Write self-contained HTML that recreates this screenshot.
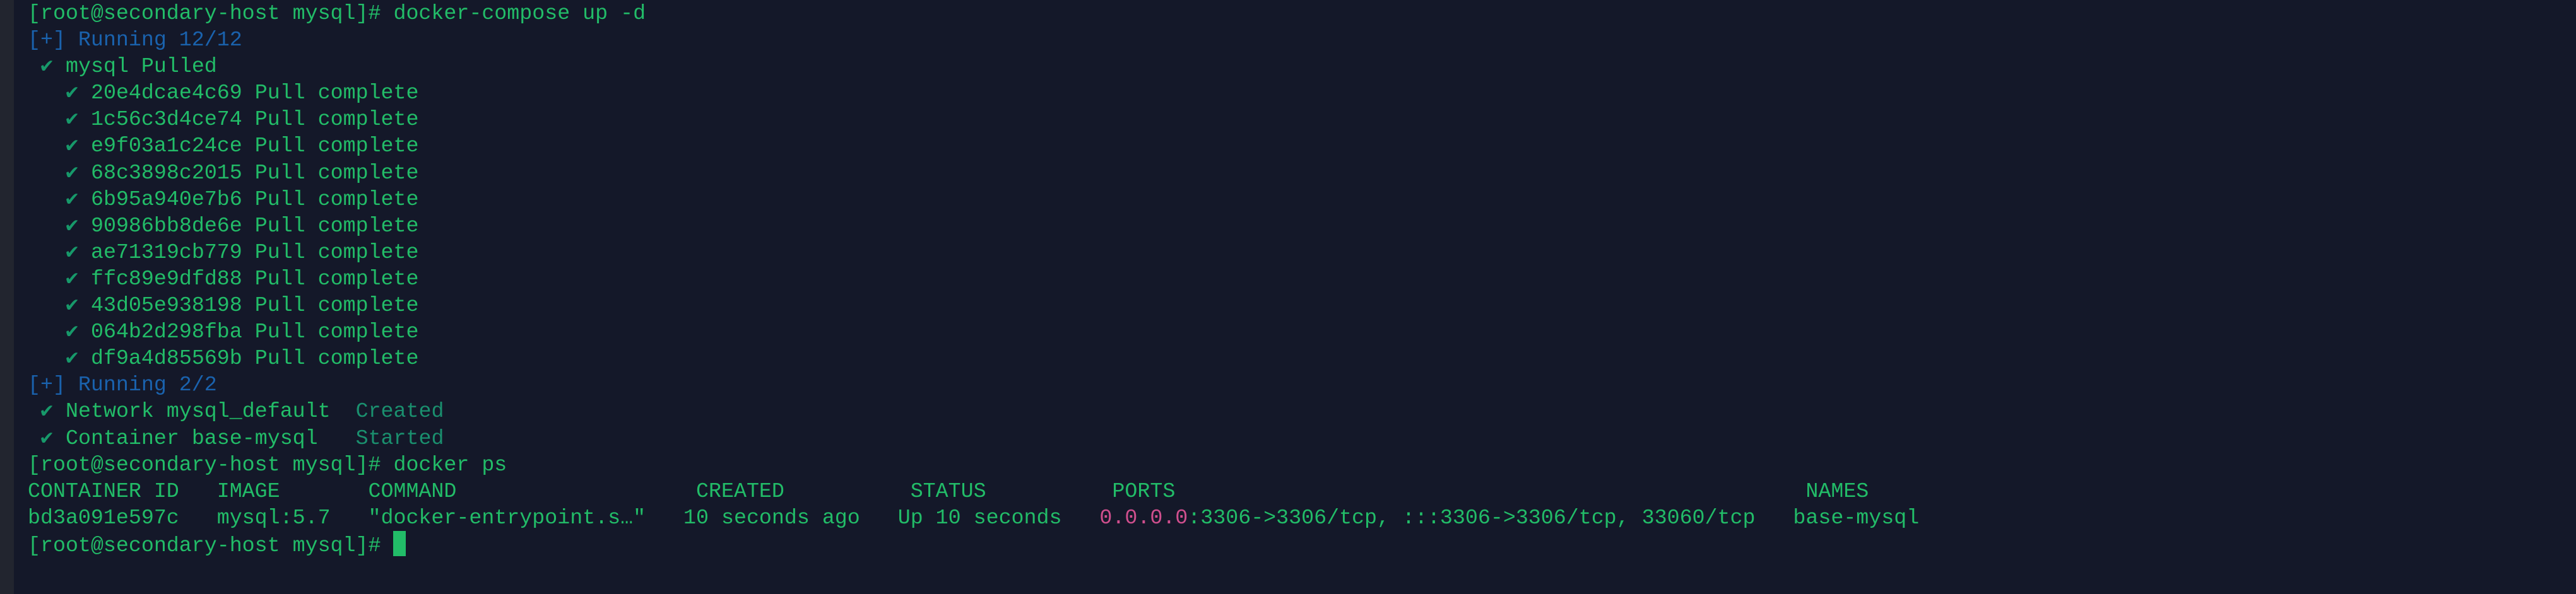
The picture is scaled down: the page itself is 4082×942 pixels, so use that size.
<!DOCTYPE html>
<html><head><meta charset="utf-8"><style>
html,body{margin:0;padding:0;width:4082px;height:942px;background:#141829;overflow:hidden}
.strip{position:absolute;left:0;top:0;width:22px;height:942px;background:#22252f}
pre{position:absolute;left:44px;top:0;margin:0;font-family:"Liberation Mono","DejaVu Sans Mono",monospace;font-size:33.3px;line-height:42.1px;color:#22bc68;white-space:pre}
.b{color:#1a62ad}.k{color:#17996a}.c{color:#1a8f6e}.p{color:#d04f8e}
.cur{display:inline-block;width:20px;height:40px;background:#22bc68;vertical-align:-8px}
</style></head><body><div class="strip"></div><pre>[root@secondary-host mysql]# docker-compose up -d
<span class="b">[+] Running 12/12</span>
 <span class="k">✔</span> mysql Pulled
   <span class="k">✔</span> 20e4dcae4c69 Pull complete
   <span class="k">✔</span> 1c56c3d4ce74 Pull complete
   <span class="k">✔</span> e9f03a1c24ce Pull complete
   <span class="k">✔</span> 68c3898c2015 Pull complete
   <span class="k">✔</span> 6b95a940e7b6 Pull complete
   <span class="k">✔</span> 90986bb8de6e Pull complete
   <span class="k">✔</span> ae71319cb779 Pull complete
   <span class="k">✔</span> ffc89e9dfd88 Pull complete
   <span class="k">✔</span> 43d05e938198 Pull complete
   <span class="k">✔</span> 064b2d298fba Pull complete
   <span class="k">✔</span> df9a4d85569b Pull complete
<span class="b">[+] Running 2/2</span>
 <span class="k">✔</span> Network mysql_default  <span class="c">Created</span>
 <span class="k">✔</span> Container base-mysql   <span class="c">Started</span>
[root@secondary-host mysql]# docker ps
CONTAINER ID   IMAGE       COMMAND                   CREATED          STATUS          PORTS                                                  NAMES
bd3a091e597c   mysql:5.7   "docker-entrypoint.s…"   10 seconds ago   Up 10 seconds   <span class="p">0.0.0.0</span>:3306-&gt;3306/tcp, :::3306-&gt;3306/tcp, 33060/tcp   base-mysql
[root@secondary-host mysql]# <span class="cur"></span></pre></body></html>
